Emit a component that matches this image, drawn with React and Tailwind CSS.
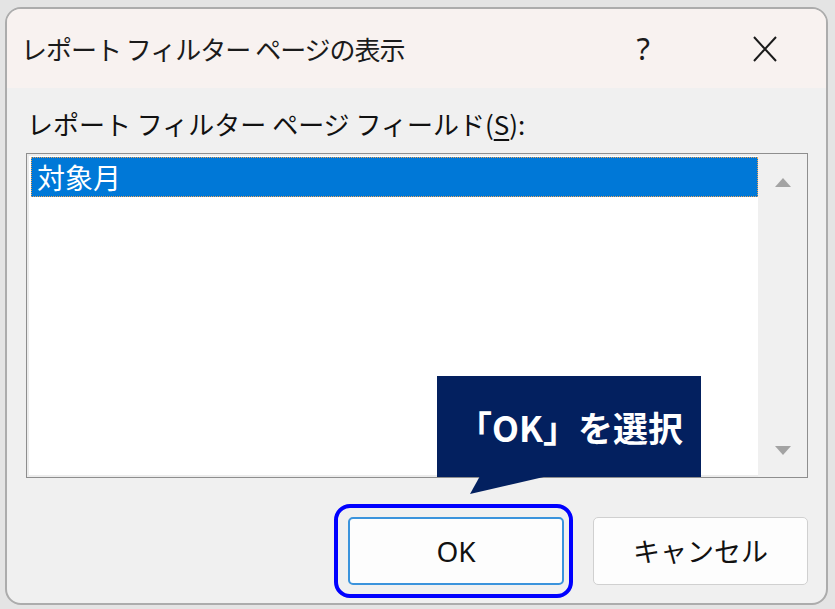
import React from 'react';

const jp = { fontFamily: '"Noto Sans CJK JP", "Noto Sans", sans-serif' };

const App = () => {
    return (
        <div className="relative w-[835px] h-[609px] bg-[#e4e4e4] pt-[7px] pl-[5px] pr-[7px] pb-[4px] flex" style={jp}>
            {/* Dialog */}
            <div className="flex-1 flex flex-col border-2 border-[#acacac] rounded-[16px] overflow-hidden bg-[#f0f0f0]">
                {/* Title bar */}
                <div className="h-[79px] shrink-0 bg-[#f8f2f0] flex items-center pl-[14px] pr-[48px] text-[#1b1b1b]">
                    <span className="text-[26px] leading-none tracking-[-1px]">レポート フィルター ページの表示</span>
                    <span className="ml-auto text-[31px] leading-none mr-[102px]" style={{ fontFamily: '"Noto Sans", sans-serif' }}>?</span>
                    <svg width="26" height="28" viewBox="0 0 26 28" className="shrink-0">
                        <path d="M2 2 L24 26 M24 2 L2 26" stroke="#1b1b1b" strokeWidth="2" fill="none" />
                    </svg>
                </div>

                {/* Body */}
                <div className="flex-1 flex flex-col pl-[19px] pr-[18px] pt-[18px] pb-[18px]">
                    <div className="text-[26px] leading-[36px] text-[#111] pl-[1px]">
                        レポート フィルター ページ フィールド(<span className="underline underline-offset-4">S</span>):
                    </div>

                    {/* List box */}
                    <div className="mt-[11px] h-[325px] border border-[#8e8e8e] flex">
                        <div className="flex-1 flex border-2 border-[#ececec] border-r-0">
                            <div className="flex-1 bg-white pt-[1px] pl-[2px]">
                                <div className="h-[40px] bg-[#0078d7] border border-dotted border-[#e8a25a] flex items-center pl-[5px] text-white text-[28px] leading-none">
                                    対象月
                                </div>
                            </div>
                        </div>
                        <div className="w-[49px] bg-[#f0f0f0] flex flex-col items-center justify-between pt-[24px] pb-[22px]">
                            <svg width="16" height="9" viewBox="0 0 16 9"><path d="M8 0 L16 9 L0 9 Z" fill="#a3a3a3" /></svg>
                            <svg width="16" height="9" viewBox="0 0 16 9"><path d="M0 0 L16 0 L8 9 Z" fill="#a3a3a3" /></svg>
                        </div>
                    </div>

                    {/* Buttons */}
                    <div className="mt-auto flex justify-end gap-[29px]">
                        <div className="relative">
                            <button className="w-[216px] h-[68px] bg-[#fdfdfd] border-2 border-[#3a93dc] rounded-[5px] text-[28px] text-[#111] flex items-center justify-center" style={{ fontFamily: '"Noto Sans", "Noto Sans CJK JP", sans-serif' }}>
                                OK
                            </button>
                            {/* highlight ring */}
                            <div className="absolute -left-[14px] -right-[9px] -top-[13px] -bottom-[13px] border-[4px] border-[#0000ff] rounded-[16px]"></div>
                        </div>
                        <button className="w-[215px] h-[68px] bg-[#fdfdfd] border border-[#d0d0d0] rounded-[5px] text-[27px] text-[#111] flex items-center justify-center">
                            キャンセル
                        </button>
                    </div>
                </div>
            </div>

            {/* Callout */}
            <div className="absolute left-[437px] top-[376px] w-[264px] h-[101px] bg-[#03205f] flex items-center justify-center">
                <span className="text-white text-[35px] font-bold leading-none pl-[2px]">「OK」を選択</span>
            </div>
            <svg className="absolute left-[465px] top-[476px]" width="90" height="20" viewBox="0 0 90 20">
                <path d="M15 0 L83 0 L5 18 Z" fill="#03205f" />
            </svg>
        </div>
    );
};

export default App;
